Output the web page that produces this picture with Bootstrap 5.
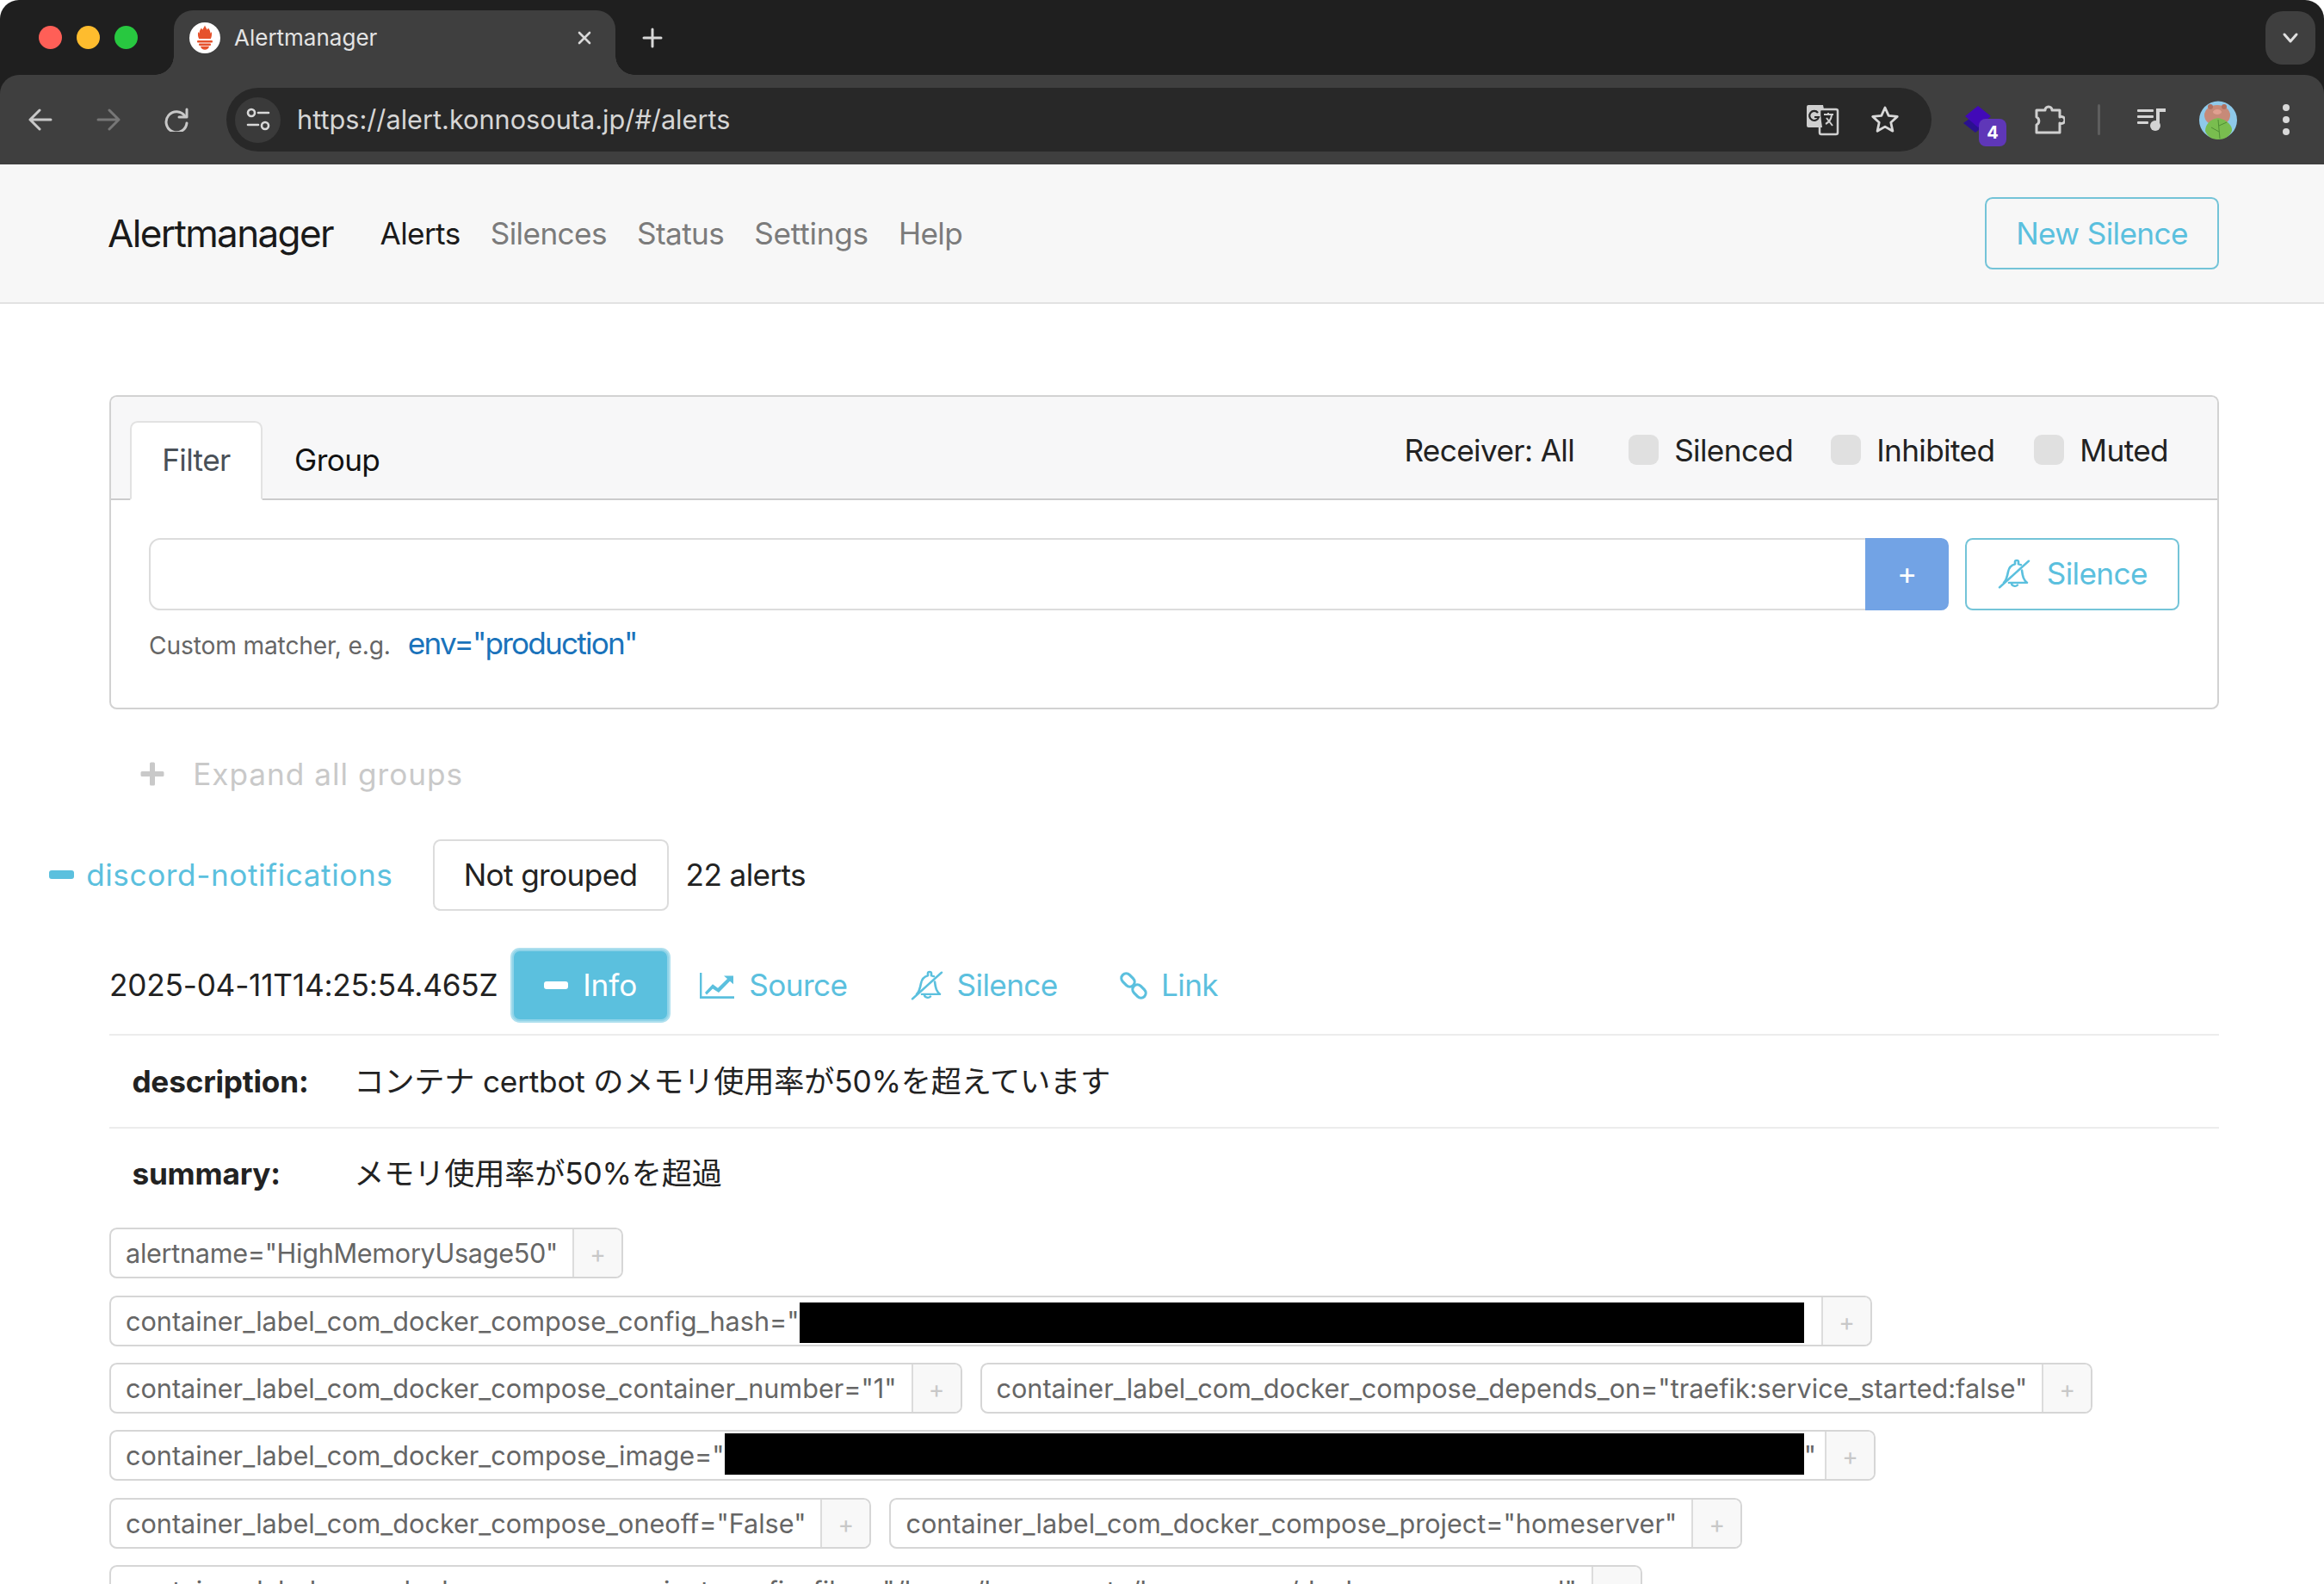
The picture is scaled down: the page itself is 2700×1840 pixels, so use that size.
<!DOCTYPE html>
<html lang="en">
<head>
<meta charset="utf-8">
<title>Alertmanager</title>
<link rel="stylesheet" href="https://cdn.jsdelivr.net/npm/bootstrap@5.3.0/dist/css/bootstrap.min.css">
<style>
:root{--bs-border-width:2px;--bs-border-radius:.25rem;--bs-border-color:#dcdcdc;--bs-body-color:#222;--bs-body-font-family:Inter,"Noto Sans CJK JP",sans-serif;--am-info:#5bc0de}
html{font-size:35.2px}
body{width:2700px;height:1840px;overflow:hidden;background:#fff;letter-spacing:-.018em}
svg{display:block;flex:none}
/* browser chrome */
.wc{background:#1f1f1f;height:191px;letter-spacing:0;font-size:26px;border-radius:22px 22px 0 0;position:relative}
.wc-top{height:87px;display:flex;align-items:center}
.light{width:27px;height:27px;border-radius:50%;margin-left:17px;flex:none}
.light-r{background:#ff5f57;margin-left:45px}.light-y{background:#febc2e}.light-g{background:#28c840}
.wtab{margin:12px 0 0 42px;width:513px;height:75px;background:#3f3f3f;border-radius:22px 22px 0 0;display:flex;align-items:center;color:#e3e3e3;padding:0 0 12px 18px;position:relative;flex:none}
.wtab::before,.wtab::after{content:"";position:absolute;bottom:0;width:22px;height:22px}
.wtab::before{left:-22px;background:radial-gradient(circle at 0 0,#1f1f1f 21.5px,#3f3f3f 22px)}
.wtab::after{right:-22px;background:radial-gradient(circle at 100% 0,#1f1f1f 21.5px,#3f3f3f 22px)}
.wtab-title{margin-left:16px;flex:1}
.wtab-x{margin-right:26px}
.wplus{margin-left:31px}
.wdrop{margin-left:auto;margin-right:10px;width:58px;height:62px;border-radius:20px;background:#3f3f3f;display:flex;align-items:center;justify-content:center}
.wbar{height:104px;background:#3f3f3f;border-radius:22px 22px 0 0;display:flex;align-items:center;padding-left:33px}
.wbar svg.nav-i{margin-right:51px}
.omni{margin-left:-7px;width:1981px;height:74px;border-radius:37px;background:#282828;display:flex;align-items:center;padding:0 37px 0 10px;color:#d6d6d6;font-size:30.7px;flex:none}
.omni-site{width:53px;height:53px;border-radius:50%;background:#3a3a3a;display:flex;align-items:center;justify-content:center;margin-right:19px}
.omni-url{flex:1}
.omni-tr{margin-right:36px}
.ext-wrap{position:relative;margin-left:35px;width:46px;height:50px;padding-top:8px}
.ext-badge{position:absolute;left:20px;top:24px;width:32px;height:32px;border-radius:8px;background:#5f37b8;color:#fff;font-size:20px;font-weight:700;display:flex;align-items:center;justify-content:center}
.w-puzzle{margin-left:38px}
.wdiv{width:3px;height:36px;background:#5e5e5e;margin:0 43px 0 38px;border-radius:2px;flex:none}
.w-avatar{margin-left:39px}
.w-dots{margin-left:52px}
/* app */
.am-nav{background:#f7f7f7;border-bottom:2px solid #e2e2e2;height:162px;padding:0 122px 0 127px}
.am-nav .navbar-brand{font-size:1.25rem;color:#1a1a1a;margin:0 37px 0 -2px;padding:0;letter-spacing:-.037em}
.am-nav .nav-link{padding:.5rem;color:#7b7b7b}
.am-nav .nav-link.active{color:#1a1a1a}
.am-nav .am-wide{letter-spacing:-.008em}
.am-btn{--bs-btn-padding-x:.97rem;--bs-btn-padding-y:.375rem;--bs-btn-font-size:1rem;--bs-btn-border-radius:.25rem;display:inline-flex;align-items:center;letter-spacing:inherit;white-space:nowrap}
.btn-outline-info.am-btn{--bs-btn-color:var(--am-info);--bs-btn-border-color:#74c4d8;--bs-btn-hover-bg:transparent;--bs-btn-hover-color:var(--am-info);--bs-btn-hover-border-color:#74c4d8}
.am-main{padding:0 122px 0 127px}
.am-card{margin-top:3rem;height:365px}
.am-head{padding:28px 57px 0 22px;background:#f7f7f8;display:flex;justify-content:space-between;align-items:flex-start;height:120px}
.am-head .nav-tabs{margin:0;border:0}
.am-head .nav-link{padding:.5rem 1rem;color:#111;border:2px solid transparent;margin:0}
.am-head .nav-link.active{color:#495057;background:#fff;border-color:#e2e2e2 #e2e2e2 #fff}
.am-filters{margin-top:8px;display:flex;align-items:center}
.am-filters .form-check{display:flex;align-items:center;margin:0 0 0 46px;padding:0;min-height:0}
.am-filters .form-check.first{margin-left:63px}
.am-filters .form-check.second{margin-left:44px}
.am-filters .form-check-input{margin:0 18px 0 0;float:none;background-color:#e0e0e0;border:0;width:35px;height:35px;border-radius:9px}
.am-body{padding:44px}
.am-form{display:flex;gap:19px}
.am-form .form-control{height:84px;font-size:1rem;border-color:#dcdcdc}
.am-form .btn-outline-info{--bs-btn-padding-x:1rem}
.am-add{--bs-btn-padding-x:0;width:97px;justify-content:center;background:#72a3e5;border-color:#72a3e5;color:#fff;font-size:1rem}
.am-add:hover{background:#72a3e5;color:#fff;border-color:#72a3e5}
.am-hint{margin-top:12px;display:flex;align-items:baseline;color:#666;font-size:.8rem;letter-spacing:-.15px}
.am-hint a{color:#1a73bb;font-size:1rem;margin-left:20px;text-decoration:none;letter-spacing:-.052em}
.am-ico{margin-right:.5rem}
.am-expand{margin-top:34px;color:#c9c9c9;--bs-btn-border-width:2px;--bs-btn-border-color:transparent;letter-spacing:.028em}
.am-expand .am-ico{margin-right:33px}
.am-group{margin:34px 0 0 -106px;display:flex;align-items:center}
.am-gname{color:var(--am-info);--bs-btn-border-color:transparent;margin-right:10px;letter-spacing:.016em}
.am-gname .am-ico{margin-right:14px}
.am-gname:hover,.am-plainlink:hover{color:var(--am-info)}
.am-gbtn{--bs-btn-color:#222;--bs-btn-border-color:#dcdcdc}
.am-count{margin-left:20px}
.am-alert{margin-top:45px;display:flex;align-items:center}
.am-time{margin-right:17px;letter-spacing:-.006em}
.am-info{--bs-btn-color:#fff;--bs-btn-bg:var(--am-info);--bs-btn-border-color:#8fd3e8;--bs-btn-hover-color:#fff;--bs-btn-hover-bg:var(--am-info);--bs-btn-hover-border-color:#8fd3e8;box-shadow:0 0 0 2px rgba(91,192,222,.5);letter-spacing:0}
.am-plainlink{color:var(--am-info);--bs-btn-border-color:transparent}
.am-plainlink .am-ico-s{margin-right:15px}
.am-plainlink .am-ico-l{margin-right:16px}
.am-anno.table{margin:15px 0 10px;--bs-table-color:#222;--bs-table-border-color:#ececec;letter-spacing:-.2px}
.am-anno.table th,.am-anno.table td{padding:.75rem;white-space:nowrap;border-bottom:0;border-top:2px solid #ececec;font-weight:400;line-height:1.5}
.am-anno.table th{font-weight:700;width:1%}
.am-anno.table td{width:99%}
.am-labels{display:flex;flex-direction:column;gap:19.4px}
.am-lab-row{display:flex;gap:21px}
.am-lab{display:inline-flex;height:59px;border:2px solid #d6d6d6;border-radius:.25rem;font-size:.87rem;color:#666;line-height:55px;white-space:nowrap;letter-spacing:0;flex:none}
.am-lab-t{padding:0 17px;display:flex;align-items:center}
.am-lab-tight{letter-spacing:-.3px}
.am-lab-loose{letter-spacing:.1px}
.am-lab-p{width:57px;flex:none;background:#f8f8f8;border-left:2px solid #dcdcdc;color:#c8c8c8;text-align:center;border-radius:0 .2rem .2rem 0;font-size:.8rem;padding-top:2px}
.am-redact{flex:1;background:#000}
.am-hash .am-lab-t{width:1987px;padding-right:20px}
.am-hash .am-redact{height:47px;margin-top:4px}
.am-img .am-lab-t{width:1991px;padding-right:10px}
.am-img .am-redact{height:48px;margin-bottom:3px}
</style>
</head>
<body>
<div class="wc">
  <div class="wc-top">
    <span class="light light-r"></span><span class="light light-y"></span><span class="light light-g"></span>
    <div class="wtab">
      <svg width="36" height="36" viewBox="0 0 36 36"><circle cx="18" cy="18" r="18" fill="#fff"/><path d="M18 3.500c.8 2.500 2 3.300 2.500 5 1-.5 1.300-1.500 1.300-2.300 1.500 1.700 2.700 4 2.700 6.500 .3-.3 1-.8 1.300-1.700.5 2.500.2 6-1 8H11.200c-1.300-2-1.500-5.500-1-8 .3.900 1 1.400 1.300 1.700 0-2.500 1.200-4.800 2.700-6.500 0 .8.300 1.800 1.300 2.300C15.900 6.800 17.200 6 18 3.500z" fill="#e6522c"/><rect x="9" y="21" width="18" height="2.600" rx="1" fill="#e6522c"/><rect x="11" y="24.500" width="14" height="2.400" rx="1" fill="#e6522c"/><path d="M13 27.800h10c-.5 2.500-2.500 4-5 4s-4.500-1.500-5-4z" fill="#e6522c"/></svg>
      <span class="wtab-title">Alertmanager</span>
      <svg class="wtab-x" width="20" height="20" viewBox="0 0 20 20" fill="none" stroke="#d8d8d8" stroke-width="2.600" stroke-linecap="round"><path d="M4 4l12 12M16 4L4 16"/></svg>
    </div>
    <svg class="wplus" width="24" height="24" viewBox="0 0 24 24" fill="none" stroke="#d8d8d8" stroke-width="3" stroke-linecap="round"><path d="M12 2v20M2 12h20"/></svg>
    <div class="wdrop"><svg width="20" height="14" viewBox="0 0 20 14" fill="none" stroke="#e0e0e0" stroke-width="3" stroke-linecap="round" stroke-linejoin="round"><path d="M3 3l7 8 7-8"/></svg></div>
  </div>
  <div class="wbar">
    <svg class="nav-i" width="28" height="28" viewBox="0 0 28 28" fill="none" stroke="#c8c8c8" stroke-width="3" stroke-linecap="round" stroke-linejoin="round"><path d="M26 14H2M13 3L2 14l11 11"/></svg>
    <svg class="nav-i" width="28" height="28" viewBox="0 0 28 28" fill="none" stroke="#777" stroke-width="3" stroke-linecap="round" stroke-linejoin="round"><path d="M2 14h24M15 3l11 11-11 11"/></svg>
    <svg class="nav-i" width="28" height="28" viewBox="0 0 28 28" fill="none" stroke="#c8c8c8" stroke-width="3" stroke-linecap="round" stroke-linejoin="round"><path d="M24 10a12 12 0 1 0 2 8"/><path d="M26 2v9h-9"/></svg>
    <div class="omni">
      <span class="omni-site"><svg width="28" height="28" viewBox="0 0 28 28" fill="none" stroke="#d8d8d8" stroke-width="2.600" stroke-linecap="round"><circle cx="6" cy="6" r="4"/><path d="M14 6h12M2 20h12"/><circle cx="22" cy="21" r="4"/></svg></span>
      <span class="omni-url">https://alert.konnosouta.jp/#/alerts</span>
      <svg class="omni-tr" width="38" height="38" viewBox="0 0 38 38"><rect x="15" y="7" width="21" height="29" rx="2" fill="#282828" stroke="#cfcfcf" stroke-width="2.500"/><path d="M2 2h17l1 5h-5l3 21H2a2 2 0 0 1-2-2V4a2 2 0 0 1 2-2z" fill="#cfcfcf"/><path d="M13 11a5.500 5.500 0 1 0 1 5H9" fill="none" stroke="#282828" stroke-width="2.200"/><path d="M20 13h11M25 11v3M29 14c-1 6-5 9-7 10M23 17l7 9" fill="none" stroke="#cfcfcf" stroke-width="2"/></svg>
      <svg width="34" height="34" viewBox="0 0 34 34" fill="none" stroke="#d8d8d8" stroke-width="2.800" stroke-linejoin="round"><path d="M17 3l4.200 9.300 10.100 1.100-7.500 6.800 2.100 10L17 25.100 8.100 30.200l2.100-10-7.500-6.800 10.100-1.100z"/></svg>
    </div>
    <div class="ext-wrap">
      <svg width="36" height="34" viewBox="0 0 36 34"><path d="M2 21L16 11l14 10-14 11z" fill="#2a1190"/><path d="M4 13L19 1l15 12-15 13z" fill="#4209b8"/></svg>
      <span class="ext-badge">4</span>
    </div>
    <svg class="w-puzzle" width="36" height="36" viewBox="0 0 36 36" fill="none" stroke="#cfcfcf" stroke-width="3" stroke-linejoin="round"><path d="M3 7h10a4 4 0 1 1 8 0h9v8a4 4 0 1 1 0 7v11H3V24a5 5 0 0 0 0-9z"/></svg>
    <span class="wdiv"></span>
    <svg width="33" height="26" viewBox="0 0 33 26" fill="#d4d4d4"><rect x="0" y="1" width="19" height="3" rx="1"/><rect x="0" y="8" width="19" height="3" rx="1"/><rect x="0" y="15" width="13" height="3" rx="1"/><path d="M22 0h11v4h-7v16h-4z"/><circle cx="21" cy="20" r="6"/></svg>
    <svg class="w-avatar" width="44" height="45" viewBox="0 0 44 45"><circle cx="22" cy="22.500" r="22" fill="#8ec9ea"/><ellipse cx="21" cy="17" rx="15" ry="12" fill="#c78a78"/><circle cx="13" cy="7" r="3" fill="#b07060"/><circle cx="29" cy="7" r="3" fill="#b07060"/><ellipse cx="21" cy="13" rx="5" ry="3" fill="#e0a090"/><path d="M22 20c10 2 17 9 16 15-3 7-9 10-16 10-8 0-13-4-15-10 0-7 6-14 15-15z" fill="#79bd4f"/><path d="M22 22l2 22M23 29l9-4M23 36l-9-5" stroke="#4f8f34" stroke-width="1" fill="none"/></svg>
    <svg class="w-dots" width="10" height="38" viewBox="0 0 10 38" fill="#d8d8d8"><circle cx="5" cy="5" r="4"/><circle cx="5" cy="19" r="4"/><circle cx="5" cy="33" r="4"/></svg>
  </div>
</div>

<nav class="navbar navbar-expand am-nav">
  <a class="navbar-brand" href="#">Alertmanager</a>
  <ul class="navbar-nav me-auto">
    <li class="nav-item"><a class="nav-link active" href="#">Alerts</a></li>
    <li class="nav-item"><a class="nav-link" href="#">Silences</a></li>
    <li class="nav-item"><a class="nav-link" href="#">Status</a></li>
    <li class="nav-item"><a class="nav-link am-wide" href="#">Settings</a></li>
    <li class="nav-item"><a class="nav-link" href="#">Help</a></li>
  </ul>
  <a class="btn btn-outline-info am-btn" href="#">New Silence</a>
</nav>

<main class="am-main">
  <div class="card am-card">
    <div class="card-header am-head">
      <ul class="nav nav-tabs">
        <li class="nav-item"><a class="nav-link active" href="#">Filter</a></li>
        <li class="nav-item"><a class="nav-link" href="#">Group</a></li>
      </ul>
      <div class="am-filters">
        <span>Receiver: All</span>
        <label class="form-check first"><input class="form-check-input" type="checkbox"><span>Silenced</span></label>
        <label class="form-check second"><input class="form-check-input" type="checkbox"><span>Inhibited</span></label>
        <label class="form-check"><input class="form-check-input" type="checkbox"><span>Muted</span></label>
      </div>
    </div>
    <div class="card-body am-body">
      <div class="am-form">
        <div class="input-group">
          <input class="form-control" type="text" aria-label="Custom matcher">
          <button class="btn am-btn am-add" type="button">+</button>
        </div>
        <a class="btn btn-outline-info am-btn" href="#"><svg class="am-ico" width="40" height="36" viewBox="0 0 40 40" preserveAspectRatio="none" fill="none" stroke="currentColor" stroke-width="2.600" stroke-linecap="round" stroke-linejoin="round"><path d="M3 37L37 3"/><path d="M29 15c1 9 2 12 6 16H14"/><path d="M8 31c3-3 4-8 5-14 1-6 4-9 8-10V4a2 2 0 0 1 4 0v3c1 0 2 1 3 1"/><path d="M17 32a4 4 0 0 0 7 2"/></svg>Silence</a>
      </div>
      <div class="am-hint"><span>Custom matcher, e.g.</span><a href="#">env="production"</a></div>
    </div>
  </div>

  <button class="btn am-btn am-expand" type="button"><svg class="am-ico" width="28" height="28" viewBox="0 0 28 28" fill="currentColor"><path d="M11 2a1.500 1.500 0 0 1 1.500-1.500h3A1.500 1.500 0 0 1 17 2v9h9a1.500 1.500 0 0 1 1.500 1.500v3A1.500 1.500 0 0 1 26 17h-9v9a1.500 1.500 0 0 1-1.500 1.500h-3A1.500 1.500 0 0 1 11 26v-9H2a1.500 1.500 0 0 1-1.500-1.500v-3A1.500 1.500 0 0 1 2 11h9z"/></svg>Expand all groups</button>

  <div class="am-group">
    <a class="btn am-btn am-gname" href="#"><svg class="am-ico" width="29" height="10" viewBox="0 0 29 10" fill="currentColor"><rect width="29" height="10" rx="3"/></svg>discord-notifications</a>
    <button class="btn btn-outline-secondary am-btn am-gbtn" type="button">Not grouped</button>
    <span class="am-count">22 alerts</span>
  </div>

  <div class="am-alert">
    <span class="am-time">2025-04-11T14:25:54.465Z</span>
    <button class="btn am-btn am-info" type="button"><svg class="am-ico" width="28" height="9" viewBox="0 0 28 9" fill="currentColor"><rect width="28" height="9" rx="3"/></svg>Info</button>
    <a class="btn am-btn am-plainlink" href="#"><svg class="am-ico" width="40" height="30" viewBox="0 0 40 34" preserveAspectRatio="none" fill="currentColor"><path d="M0 0h2.400v31H40v3H0z"/><path d="M6 26l9-11 6 5 11-12-4-4h11v11l-4-4-13 15-7-5-7 8z"/></svg>Source</a>
    <a class="btn am-btn am-plainlink" href="#"><svg class="am-ico am-ico-s" width="40" height="36" viewBox="0 0 40 40" preserveAspectRatio="none" fill="none" stroke="currentColor" stroke-width="2.600" stroke-linecap="round" stroke-linejoin="round"><path d="M3 37L37 3"/><path d="M29 15c1 9 2 12 6 16H14"/><path d="M8 31c3-3 4-8 5-14 1-6 4-9 8-10V4a2 2 0 0 1 4 0v3c1 0 2 1 3 1"/><path d="M17 32a4 4 0 0 0 7 2"/></svg>Silence</a>
    <a class="btn am-btn am-plainlink" href="#"><svg class="am-ico am-ico-l" width="32" height="32" viewBox="0 0 32 32" fill="none" stroke="currentColor" stroke-width="3.200"><rect x="-5.500" y="-8.500" width="11" height="17" rx="5.500" transform="translate(9.500 9.500) rotate(-45)"/><rect x="-5.500" y="-8.500" width="11" height="17" rx="5.500" transform="translate(22.500 22.500) rotate(-45)"/></svg>Link</a>
  </div>

  <table class="table am-anno">
    <tbody>
      <tr><th scope="row">description:</th><td>コンテナ certbot のメモリ使用率が50%を超えています</td></tr>
      <tr><th scope="row">summary:</th><td>メモリ使用率が50%を超過</td></tr>
    </tbody>
  </table>

  <div class="am-labels">
    <div class="am-lab-row"><span class="am-lab am-lab-tight"><span class="am-lab-t">alertname="HighMemoryUsage50"</span><span class="am-lab-p">+</span></span></div>
    <div class="am-lab-row"><span class="am-lab am-hash"><span class="am-lab-t"><span>container_label_com_docker_compose_config_hash="</span><i class="am-redact"></i></span><span class="am-lab-p">+</span></span></div>
    <div class="am-lab-row"><span class="am-lab"><span class="am-lab-t">container_label_com_docker_compose_container_number="1"</span><span class="am-lab-p">+</span></span>
    <span class="am-lab"><span class="am-lab-t">container_label_com_docker_compose_depends_on="traefik:service_started:false"</span><span class="am-lab-p">+</span></span></div>
    <div class="am-lab-row"><span class="am-lab am-img"><span class="am-lab-t"><span>container_label_com_docker_compose_image="</span><i class="am-redact"></i><span>"</span></span><span class="am-lab-p">+</span></span></div>
    <div class="am-lab-row"><span class="am-lab"><span class="am-lab-t">container_label_com_docker_compose_oneoff="False"</span><span class="am-lab-p">+</span></span>
    <span class="am-lab"><span class="am-lab-t">container_label_com_docker_compose_project="homeserver"</span><span class="am-lab-p">+</span></span></div>
    <div class="am-lab-row"><span class="am-lab am-lab-loose"><span class="am-lab-t">container_label_com_docker_compose_project_config_files="/home/konnosouta/homeserver/docker-compose.yml"</span><span class="am-lab-p">+</span></span></div>
  </div>
</main>
<script src="https://cdn.jsdelivr.net/npm/bootstrap@5.3.0/dist/js/bootstrap.bundle.min.js"></script>
</body>
</html>
